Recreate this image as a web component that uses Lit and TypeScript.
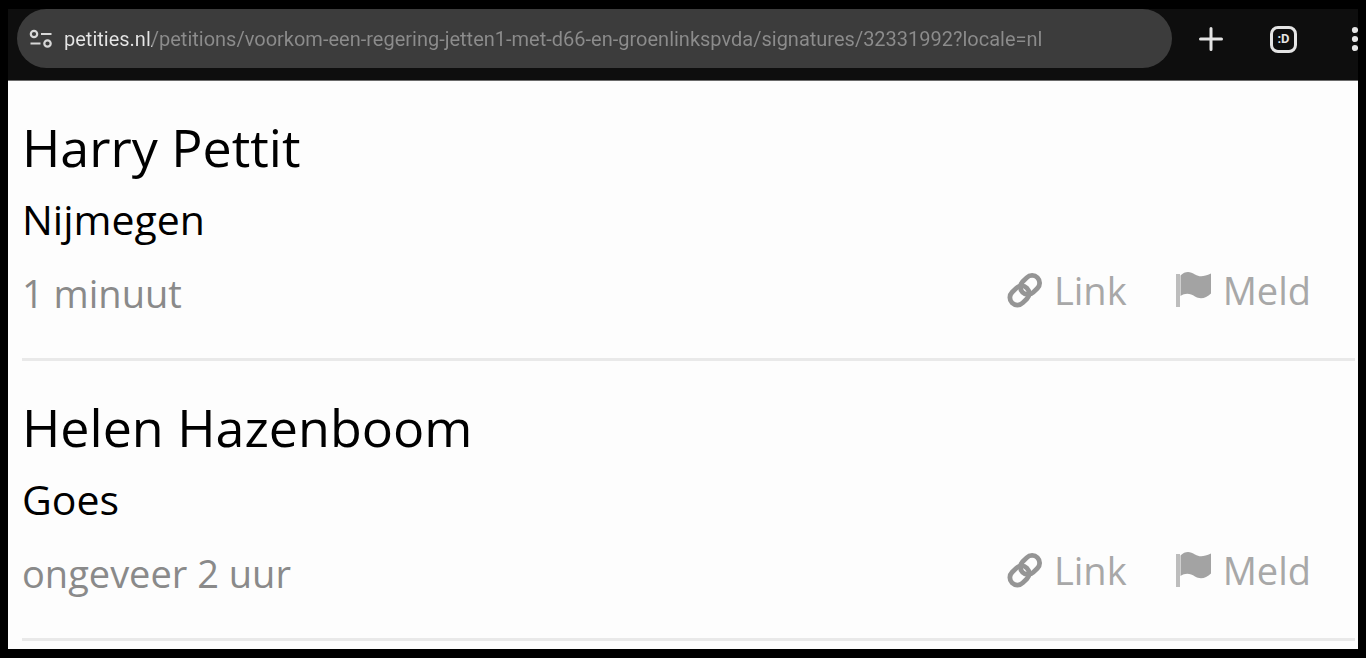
import { LitElement, html, css } from "lit";
import { customElement, property } from "lit/decorators.js";

interface Signature {
  name: string;
  city: string;
  time: string;
}

const SIGNATURES: Signature[] = [
  { name: "Harry Pettit", city: "Nijmegen", time: "1 minuut" },
  { name: "Helen Hazenboom", city: "Goes", time: "ongeveer 2 uur" },
];

@customElement("browser-bar")
export class BrowserBar extends LitElement {
  static styles = css`
    :host {
      display: flex;
      align-items: flex-start;
      height: 72px;
      box-sizing: border-box;
      padding-left: 9px;
      background: #0e0e0e;
      border-bottom: 1px solid #6b6b6b;
      overflow: hidden;
    }
    .address {
      flex: 1;
      min-width: 0;
      display: flex;
      align-items: center;
      gap: 11px;
      height: 59px;
      box-sizing: border-box;
      padding: 0 24px 0 12px;
      border-radius: 30px;
      background: #3c3c3c;
    }
    .tune {
      flex: none;
      width: 24px;
      height: 24px;
    }
    .url {
      flex: 1;
      min-width: 0;
      height: 32px;
      padding: 0;
      border: 0;
      outline: 0;
      font: 400 20px Roboto, "Open Sans", sans-serif;
      color: #8c8c8c;
      background: linear-gradient(90deg, #e6e6e6 88px, #8c8c8c 88px);
      -webkit-background-clip: text;
      background-clip: text;
      -webkit-text-fill-color: transparent;
    }
    .tools {
      flex: none;
      display: flex;
      gap: 32px;
      padding-left: 18px;
      width: 186px;
      box-sizing: border-box;
    }
    button {
      flex: none;
      display: flex;
      width: 41px;
      height: 60px;
      padding: 0;
      border: 0;
      background: none;
      align-items: center;
      justify-content: center;
      color: #e4e4e4;
    }
    .face {
      display: flex;
      align-items: center;
      justify-content: center;
      width: 27px;
      height: 27px;
      box-sizing: border-box;
      border: 3px solid currentColor;
      border-radius: 8px;
      font: 700 13px/20px Roboto, sans-serif;
    }
    .menu {
      width: 38px;
    }
  `;

  render() {
    return html`
      <div class="address">
        <svg class="tune" viewBox="0 0 24 24" fill="none" stroke="#d8d8d8" stroke-width="2.2" aria-hidden="true">
          <circle cx="5" cy="7" r="3.2" />
          <path d="M12 7h10.500M1.500 16.500h10" />
          <circle cx="18.500" cy="16.500" r="3.2" />
        </svg>
        <input
          class="url"
          type="text"
          aria-label="Adresbalk"
          spellcheck="false"
          value="petities.nl/petitions/voorkom-een-regering-jetten1-met-d66-en-groenlinkspvda/signatures/32331992?locale=nl"
        />
      </div>
      <div class="tools">
        <button aria-label="Nieuw tabblad">
          <svg width="24" height="24" viewBox="0 0 24 24" stroke="currentColor" stroke-width="3" stroke-linecap="round" aria-hidden="true">
            <path d="M12 1.500v21M1.500 12h21" />
          </svg>
        </button>
        <button aria-label="Tabbladen"><span class="face">:D</span></button>
        <button class="menu" aria-label="Menu">
          <svg width="8" height="26" viewBox="0 0 8 26" fill="currentColor" aria-hidden="true">
            <circle cx="4" cy="4" r="3.1" />
            <circle cx="4" cy="13" r="3.1" />
            <circle cx="4" cy="22" r="3.1" />
          </svg>
        </button>
      </div>
    `;
  }
}

@customElement("signature-item")
export class SignatureItem extends LitElement {
  @property({ attribute: false }) signature!: Signature;

  static styles = css`
    :host {
      display: block;
      padding: 30px 0 37px;
      border-bottom: 3px solid #e9e9e9;
    }
    h2,
    p {
      margin: 0;
      font-weight: 400;
    }
    h2 {
      font-size: 52px;
      line-height: 72px;
    }
    .city {
      margin-top: 8px;
      font-size: 41px;
      line-height: 56px;
    }
    .foot {
      display: flex;
      justify-content: space-between;
      margin-top: 18px;
      font-size: 38px;
      line-height: 56px;
      color: #8a8a8a;
    }
    .actions {
      display: flex;
      gap: 46px;
      height: 50px;
      line-height: 50px;
      padding-right: 44px;
    }
    a {
      display: flex;
      align-items: center;
      gap: 10px;
      color: #a8a8a8;
      text-decoration: none;
    }
    svg {
      width: 40px;
      height: 40px;
    }
  `;

  render() {
    const { name, city, time } = this.signature;
    return html`
      <h2>${name}</h2>
      <p class="city">${city}</p>
      <div class="foot">
        <span>${time}</span>
        <div class="actions">
          <a href="#link">
            <svg viewBox="0 0 40 40" fill="none" stroke="#959595" stroke-width="4.800" aria-hidden="true">
              <rect x="-10.500" y="-7.500" width="21" height="15" rx="7.500" transform="translate(26 15) rotate(-45)" />
              <rect x="-10.500" y="-7.500" width="21" height="15" rx="7.500" transform="translate(15.500 25.500) rotate(-45)" />
            </svg>
            Link
          </a>
          <a href="#meld">
            <svg viewBox="0 0 40 40" aria-hidden="true">
              <path d="M3 4h4v33H3z" fill="#bdbdbd" />
              <path d="M7.500 5.500C12 1 17 1 22 4.500C27 7.500 31 6.500 38 3.500V23.500C33 28.500 27 29.500 22 26.500C17 23 12 23 7.500 26Z" fill="#a3a3a3" />
            </svg>
            Meld
          </a>
        </div>
      </div>
    `;
  }
}

@customElement("app-root")
export class AppRoot extends LitElement {
  static styles = css`
    :host {
      display: flex;
      flex-direction: column;
      min-height: 100vh;
      box-sizing: border-box;
      padding: 9px 8px;
      background: #000;
      color: #000;
      font-family: "Open Sans", "Noto Sans", sans-serif;
    }
    main {
      flex: 1;
      padding: 0 3px 0 14px;
      background: #fdfdfd;
    }
  `;

  render() {
    return html`
      <browser-bar></browser-bar>
      <main>
        ${SIGNATURES.map((s) => html`<signature-item .signature=${s}></signature-item>`)}
      </main>
    `;
  }
}
